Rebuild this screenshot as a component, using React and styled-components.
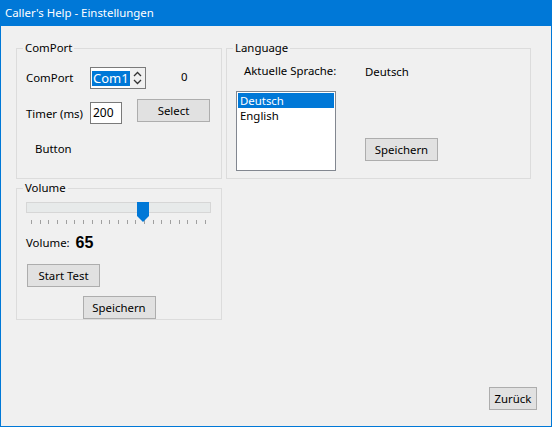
import React from "react";
import styled, { createGlobalStyle } from "styled-components";

const GlobalStyle = createGlobalStyle`
  html, body {
    margin: 0;
    padding: 0;
    background: #f0f0f0;
  }
  * {
    box-sizing: border-box;
  }
`;

const Window = styled.div`
  display: flex;
  flex-direction: column;
  width: 552px;
  height: 427px;
  border: 1px solid #0078d7;
  border-top: 0;
  font-family: "Noto Sans", "Liberation Sans", sans-serif;
  font-size: 11.4px;
  color: #000;
  background: #f0f0f0;
`;

const TitleBar = styled.div`
  height: 26px;
  margin: 0 -1px;
  padding: 0 0 2px 5px;
  display: flex;
  align-items: center;
  background: #0078d7;
  color: #fff;
  font-size: 11.4px;
`;

const Body = styled.div`
  flex: 1;
  display: flex;
  flex-direction: column;
  padding: 14px 14px 16px 15px;
`;

const Groups = styled.div`
  display: grid;
  grid-template-columns: 206px 305px;
  grid-template-rows: 139px 140px;
  column-gap: 4px;
  row-gap: 1px;
`;

const Group = styled.fieldset`
  margin: 0;
  padding: 0;
  min-width: 0;
  border: 1px solid #dcdcdc;
  grid-column: ${(p) => p.$col || "auto"};
  grid-row: ${(p) => p.$row || "auto"};
`;

const Legend = styled.legend`
  margin-left: 6px;
  padding: 0 2px;
  line-height: 16px;
  font-size: 11.4px;
`;

const Row = styled.div`
  display: flex;
  align-items: ${(p) => p.$align || "center"};
  padding-left: ${(p) => p.$indent || 0}px;
  margin-top: ${(p) => p.$top || 0}px;
`;

const Label = styled.span`
  width: ${(p) => (p.$w ? `${p.$w}px` : "auto")};
  white-space: nowrap;
  line-height: 16px;
  margin-top: ${(p) => p.$top || 0}px;
`;

const Spinner = styled.div`
  display: flex;
  align-items: center;
  width: 56px;
  height: 22px;
  border: 1px solid #7a7a7a;
  background: #fff;
  padding: 0 0 0 1px;
`;

const Selected = styled.span`
  background: #0078d7;
  color: #fff;
  line-height: 15px;
  padding: 0 1px;
  font-size: 13px;
`;

const SpinArrows = styled.div`
  margin-left: auto;
  width: 17px;
  height: 100%;
  display: flex;
  flex-direction: column;
  align-items: center;
  justify-content: center;
  gap: 2px;
  background: #f0f0f0;
`;

const TextInput = styled.div`
  width: 32px;
  height: 22px;
  border: 1px solid #7a7a7a;
  background: #fff;
  padding: 2px 0 0 2px;
  line-height: 16px;
  font-size: 12px;
  margin-top: 3px;
`;

const Button = styled.button`
  width: ${(p) => p.$w || 73}px;
  height: 23px;
  padding: 0;
  margin: 0;
  border: 1px solid #adadad;
  background: #e1e1e1;
  font-family: inherit;
  font-size: 11.4px;
  color: #000;
  line-height: 16px;
`;

const LangGrid = styled.div`
  display: grid;
  grid-template-columns: 100px auto;
  column-gap: 29px;
  padding: 7px 0 0 9px;
`;

const ListBox = styled.div`
  margin-top: 11px;
  width: 100px;
  height: 80px;
  border: 1px solid #828790;
  background: #fff;
  padding: 1px;
`;

const ListItem = styled.div`
  height: 15px;
  line-height: 15px;
  padding-left: 2px;
  font-size: 11.4px;
  overflow: hidden;
  background: ${(p) => (p.$selected ? "#0078d7" : "transparent")};
  color: ${(p) => (p.$selected ? "#fff" : "#000")};
`;

const SliderBox = styled.div`
  position: relative;
  margin: 6px 0 0 9px;
  width: 185px;
  height: 26px;
`;

const Track = styled.div`
  margin-top: 3px;
  height: 11px;
  background: #e7eaea;
  border: 1px solid #d6d6d6;
`;

const Ticks = styled.div`
  display: flex;
  justify-content: space-between;
  padding: 0 5px;
  margin-top: 7px;
`;

const Tick = styled.span`
  width: 1px;
  height: 4px;
  background: #a0a0a0;
`;

const Thumb = styled.svg`
  position: absolute;
  top: 0;
`;

const VolumeValue = styled.span`
  margin-left: 6px;
  font-family: "Liberation Sans", Arial, sans-serif;
  font-weight: bold;
  font-size: 16px;
  line-height: 18px;
`;

const Centered = styled.div`
  display: flex;
  justify-content: center;
  margin-top: 9px;
`;

const Footer = styled.div`
  margin-top: auto;
  display: flex;
  justify-content: flex-end;
`;

const Chevron = ({ up }) => (
  <svg width="9" height="6" viewBox="0 0 9 6">
    <path
      d={up ? "M1 5 L4.5 1.5 L8 5" : "M1 1 L4.5 4.5 L8 1"}
      fill="none"
      stroke="#333"
      strokeWidth="1.3"
    />
  </svg>
);

const Slider = ({ value }) => {
  const left = 5 + (173 * value) / 100 - 6;
  return (
    <SliderBox>
      <Track />
      <Ticks>
        {Array.from({ length: 21 }).map((_, i) => (
          <Tick key={i} />
        ))}
      </Ticks>
      <Thumb width="12" height="20" viewBox="0 0 12 20" style={{ left }}>
        <path d="M0 0 H12 V14 L6 20 L0 14 Z" fill="#0078d7" />
      </Thumb>
    </SliderBox>
  );
};

export default function App() {
  const volume = 65;
  return (
    <>
      <GlobalStyle />
      <Window>
        <TitleBar>Caller's Help - Einstellungen</TitleBar>
        <Body>
          <Groups>
            <Group $col={1} $row={1}>
              <Legend>ComPort</Legend>
              <Row $indent={9} $top={11}>
                <Label $w={64}>ComPort</Label>
                <Spinner>
                  <Selected>Com1</Selected>
                  <SpinArrows>
                    <Chevron up />
                    <Chevron />
                  </SpinArrows>
                </Spinner>
                <Label $top={-3} style={{ marginLeft: 35 }}>0</Label>
              </Row>
              <Row $indent={9} $top={10} $align="flex-start">
                <Label $w={64} $top={7}>Timer (ms)</Label>
                <TextInput>200</TextInput>
                <Button style={{ marginLeft: 15 }}>Select</Button>
              </Row>
              <Row $indent={18} $top={17}>
                <Label>Button</Label>
              </Row>
            </Group>

            <Group $col={2} $row={1}>
              <Legend>Language</Legend>
              <LangGrid>
                <Label style={{ marginLeft: 8 }}>Aktuelle Sprache:</Label>
                <Label $top={1}>Deutsch</Label>
                <ListBox>
                  <ListItem $selected>Deutsch</ListItem>
                  <ListItem>English</ListItem>
                </ListBox>
                <Button style={{ alignSelf: "end", marginBottom: 10 }}>
                  Speichern
                </Button>
              </LangGrid>
            </Group>

            <Group $col={1} $row={2}>
              <Legend>Volume</Legend>
              <Slider value={volume} />
              <Row $indent={9} $top={6}>
                <Label>Volume:</Label>
                <VolumeValue>{volume}</VolumeValue>
              </Row>
              <Row $indent={10} $top={12}>
                <Button>Start Test</Button>
              </Row>
              <Centered>
                <Button>Speichern</Button>
              </Centered>
            </Group>
          </Groups>
          <Footer>
            <Button $w={48}>Zurück</Button>
          </Footer>
        </Body>
      </Window>
    </>
  );
}
